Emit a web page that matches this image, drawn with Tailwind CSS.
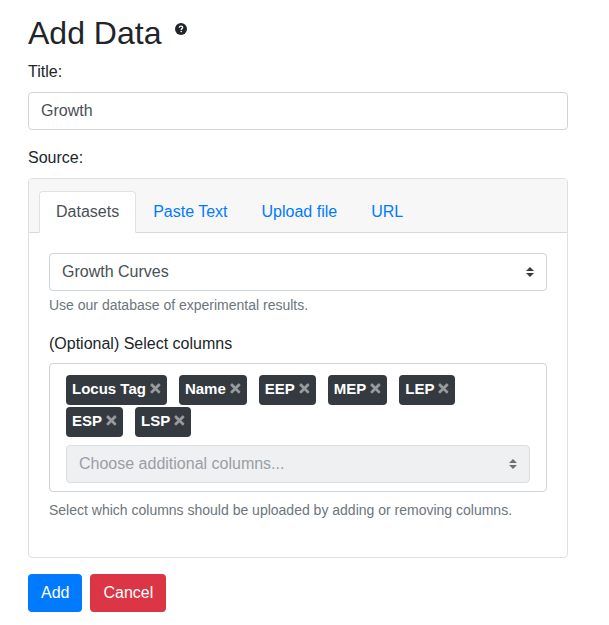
<!DOCTYPE html>
<html lang="en">
<head>
<meta charset="utf-8">
<meta name="viewport" content="width=device-width, initial-scale=1">
<title>Add Data</title>
<script src="https://cdn.jsdelivr.net/npm/@tailwindcss/browser@4"></script>
</head>
<body class="bg-white font-['Liberation_Sans',Arial,sans-serif] text-base text-[#212529]">
<svg class="hidden" aria-hidden="true">
  <symbol id="times" viewBox="-18 -12 396 540"><path fill="currentColor" stroke="currentColor" stroke-width="10" d="M242.72 256l100.07-100.07c12.28-12.28 12.28-32.19 0-44.48l-22.24-22.24c-12.28-12.28-32.19-12.28-44.48 0L176 189.28 75.93 89.21c-12.28-12.28-32.19-12.28-44.48 0L9.21 111.45c-12.28 12.28-12.28 32.19 0 44.48L109.28 256 9.21 356.07c-12.28 12.28-12.28 32.19 0 44.48l22.24 22.24c12.28 12.28 32.2 12.28 44.48 0L176 322.72l100.07 100.07c12.28 12.28 32.2 12.28 44.48 0l22.24-22.24c12.28-12.28 12.28-32.19 0-44.48L242.72 256z"/></symbol>
  <symbol id="carets" viewBox="0 0 4 5"><path fill="currentColor" d="M2 0L0 2h4zm0 5L0 3h4z"/></symbol>
</svg>
<form class="pt-[14px] pr-[41px] pb-3 pl-7">
  <div class="mb-2 flex items-start gap-[14px]">
    <h1 class="text-[32px] leading-[38px]">Add Data</h1>
    <button type="button" aria-label="Help" class="mt-[9px]">
      <svg class="block size-3" viewBox="0 0 12 12" aria-hidden="true"><circle cx="6" cy="6" r="6" fill="currentColor"/><path d="M4.2 4.6C4.400 3.600 5.100 3.200 6 3.200s1.700.5 1.700 1.400C7.700 5.700 6.200 5.600 6.200 6.900" fill="none" stroke="white" stroke-width="1.300"/><circle cx="6.200" cy="8.500" r=".8" fill="white"/></svg>
    </button>
  </div>

  <label for="title" class="mb-2 block">Title:</label>
  <input id="title" type="text" value="Growth" class="mb-4 block h-[38px] w-full rounded border border-[#ced4da] bg-white px-3 text-[#495057]">

  <p id="source-label" class="mb-2">Source:</p>
  <section aria-labelledby="source-label" class="mb-4 rounded border border-[#dfdfdf]">
    <nav class="flex rounded-t-[3px] border-b border-[#d9d9d9] bg-[#f7f7f7] px-[10px] pt-3">
      <a href="#datasets" aria-current="true" class="-mb-px rounded-t border border-[#dee2e6] border-b-white bg-white px-4 py-2 text-[#495057]">Datasets</a>
      <a href="#paste" class="-mb-px border border-transparent px-4 py-2 text-[#007bff]">Paste Text</a>
      <a href="#upload" class="-mb-px border border-transparent px-4 py-2 text-[#007bff]">Upload file</a>
      <a href="#url" class="-mb-px border border-transparent px-4 py-2 text-[#007bff]">URL</a>
    </nav>
    <div id="datasets" class="p-5 pb-9">
      <div class="relative mb-1">
        <select aria-label="Dataset" class="block h-[38px] w-full appearance-none rounded border border-[#ced4da] bg-white pr-7 pl-3 text-[#495057]">
          <option>Growth Curves</option>
        </select>
        <svg class="pointer-events-none absolute top-[14px] right-[13px] h-[10px] w-2 text-[#343a40]" aria-hidden="true"><use href="#carets"/></svg>
      </div>
      <p class="mb-4 text-sm leading-[21px] text-[#6c757d]">Use our database of experimental results.</p>

      <label for="columns" class="mb-[7px] block">(Optional) Select columns</label>
      <div class="mb-2 rounded border border-[#ced4da] px-4 pt-[11px] pb-2">
        <ul class="mr-16 mb-2 flex flex-wrap gap-x-3 gap-y-[2px] text-[15px] leading-[22px] font-bold text-white">
          <li class="flex h-[30px] items-start gap-1 rounded bg-[#343a40] px-[6px] pt-[3px]">Locus Tag<button type="button" aria-label="Remove Locus Tag" class="mt-[3px] text-[#999c9f]"><svg class="block h-[15px] w-[11px]" aria-hidden="true"><use href="#times"/></svg></button></li>
          <li class="flex h-[30px] items-start gap-1 rounded bg-[#343a40] px-[6px] pt-[3px]">Name<button type="button" aria-label="Remove Name" class="mt-[3px] text-[#999c9f]"><svg class="block h-[15px] w-[11px]" aria-hidden="true"><use href="#times"/></svg></button></li>
          <li class="flex h-[30px] items-start gap-1 rounded bg-[#343a40] px-[6px] pt-[3px]">EEP<button type="button" aria-label="Remove EEP" class="mt-[3px] text-[#999c9f]"><svg class="block h-[15px] w-[11px]" aria-hidden="true"><use href="#times"/></svg></button></li>
          <li class="flex h-[30px] items-start gap-1 rounded bg-[#343a40] px-[6px] pt-[3px]">MEP<button type="button" aria-label="Remove MEP" class="mt-[3px] text-[#999c9f]"><svg class="block h-[15px] w-[11px]" aria-hidden="true"><use href="#times"/></svg></button></li>
          <li class="flex h-[30px] items-start gap-1 rounded bg-[#343a40] px-[6px] pt-[3px]">LEP<button type="button" aria-label="Remove LEP" class="mt-[3px] text-[#999c9f]"><svg class="block h-[15px] w-[11px]" aria-hidden="true"><use href="#times"/></svg></button></li>
          <li class="flex h-[30px] items-start gap-1 rounded bg-[#343a40] px-[6px] pt-[3px]">ESP<button type="button" aria-label="Remove ESP" class="mt-[3px] text-[#999c9f]"><svg class="block h-[15px] w-[11px]" aria-hidden="true"><use href="#times"/></svg></button></li>
          <li class="flex h-[30px] items-start gap-1 rounded bg-[#343a40] px-[6px] pt-[3px]">LSP<button type="button" aria-label="Remove LSP" class="mt-[3px] text-[#999c9f]"><svg class="block h-[15px] w-[11px]" aria-hidden="true"><use href="#times"/></svg></button></li>
        </ul>
        <div class="relative">
          <select id="columns" disabled class="block h-[38px] w-full appearance-none rounded border border-[#dadde1] bg-[#eff0f2] pr-7 pl-3 text-[#9a9ea4] opacity-100">
            <option>Choose additional columns...</option>
          </select>
          <svg class="pointer-events-none absolute top-[14px] right-[13px] h-[10px] w-2 text-[#6c6f74]" aria-hidden="true"><use href="#carets"/></svg>
        </div>
      </div>
      <p class="text-sm leading-[21px] text-[#6c757d]">Select which columns should be uploaded by adding or removing columns.</p>
    </div>
  </section>

  <div class="flex gap-2">
    <button type="submit" class="h-[38px] rounded bg-[#007bff] px-[13px] text-white">Add</button>
    <button type="button" class="h-[38px] rounded bg-[#dc3545] px-[13px] text-white">Cancel</button>
  </div>
</form>
</body>
</html>
